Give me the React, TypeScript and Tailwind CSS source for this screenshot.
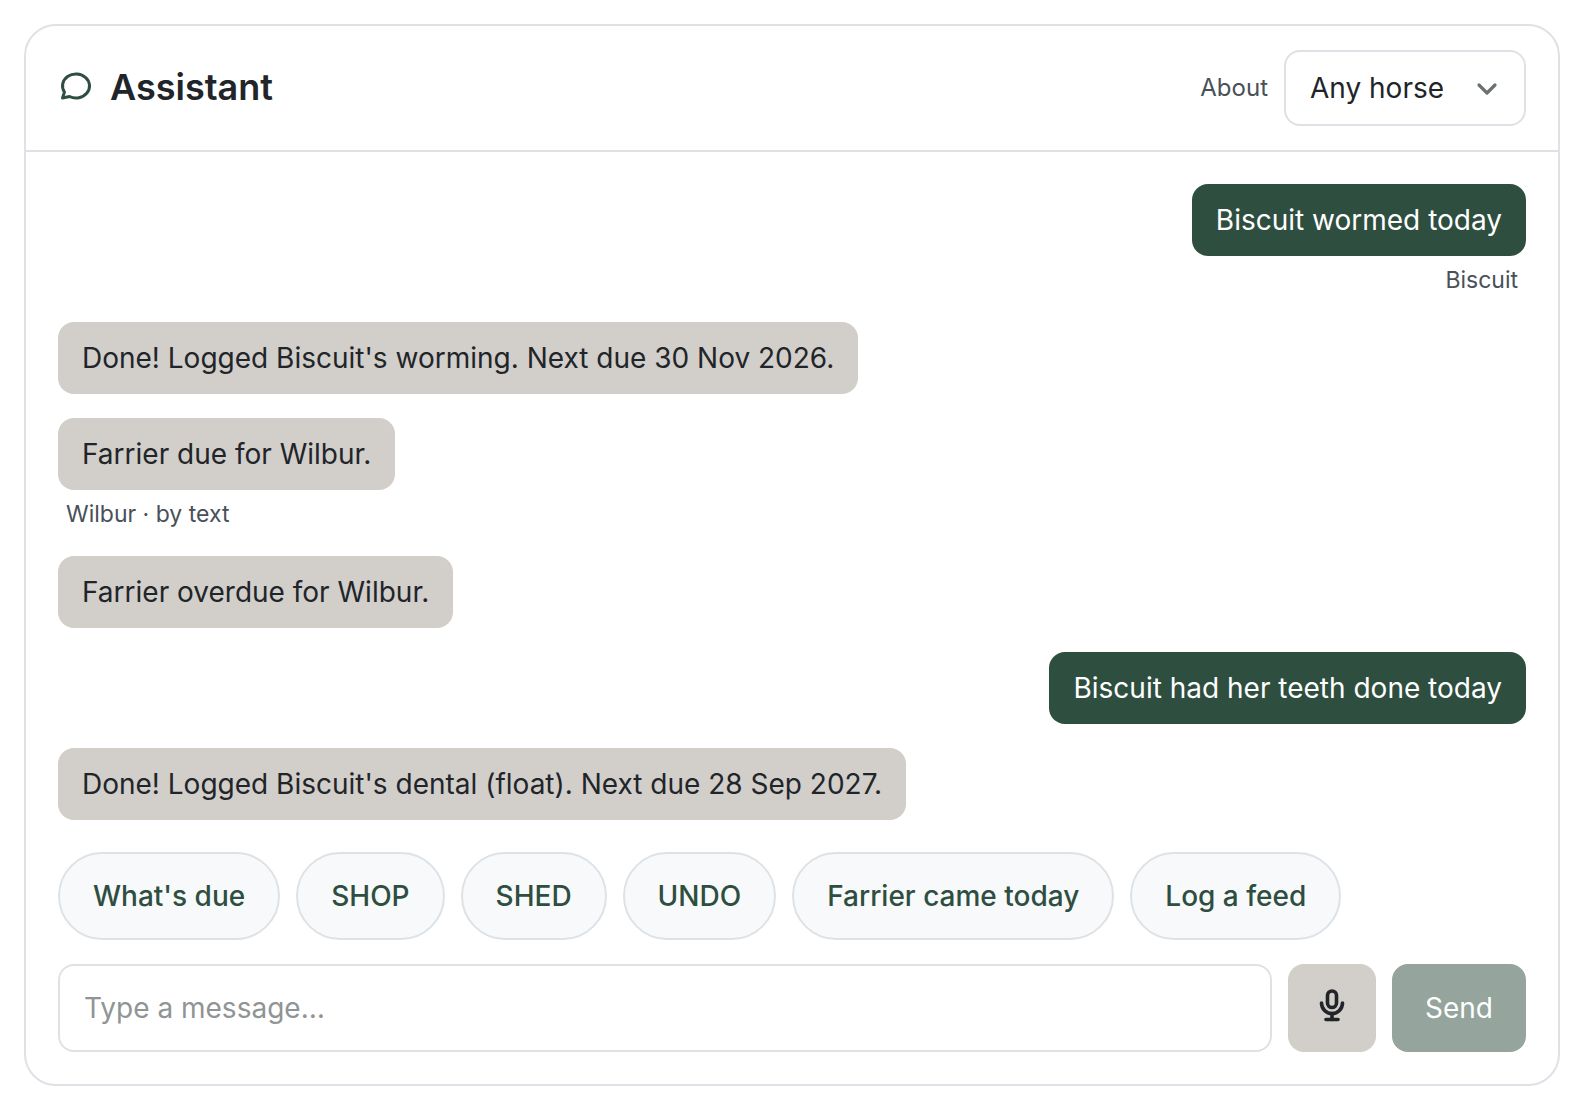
import { useState } from 'react'
import type { FormEvent } from 'react'
import { TbMessageCircle, TbMicrophone } from 'react-icons/tb'
import { clsx } from 'clsx'

type MessageT = {
  id: number
  from: 'user' | 'assistant'
  text: string
  meta?: string
}

const MESSAGES: MessageT[] = [
  { id: 1, from: 'user', text: 'Biscuit wormed today', meta: 'Biscuit' },
  { id: 2, from: 'assistant', text: "Done! Logged Biscuit's worming. Next due 30 Nov 2026." },
  { id: 3, from: 'assistant', text: 'Farrier due for Wilbur.', meta: 'Wilbur · by text' },
  { id: 4, from: 'assistant', text: 'Farrier overdue for Wilbur.' },
  { id: 5, from: 'user', text: 'Biscuit had her teeth done today' },
  { id: 6, from: 'assistant', text: "Done! Logged Biscuit's dental (float). Next due 28 Sep 2027." },
]

const QUICK_REPLIES = ["What's due", 'SHOP', 'SHED', 'UNDO', 'Farrier came today', 'Log a feed']

const HORSES = ['Any horse', 'Biscuit', 'Wilbur']

function HorseSelect() {
  return (
    <div className="flex items-center gap-4">
      <label htmlFor="horse" className="text-2xl text-[#495057]">
        About
      </label>
      <div className="relative">
        <select
          id="horse"
          className="h-[76px] w-[242px] appearance-none rounded-2xl border-2 border-[#dee2e6] bg-white pr-16 pl-6 text-[28px] text-[#212529]"
        >
          {HORSES.map((horse) => (
            <option key={horse}>{horse}</option>
          ))}
        </select>
        <svg
          viewBox="0 0 32 32"
          className="pointer-events-none absolute top-6 right-6 size-8 fill-none stroke-[#6b7072]"
          strokeWidth="3.2"
          strokeLinecap="round"
          strokeLinejoin="round"
          aria-hidden="true"
        >
          <path d="m9 11 8 8 8-8" />
        </svg>
      </div>
    </div>
  )
}

function Message({ message }: { message: MessageT }) {
  const isUser = message.from === 'user'

  return (
    <li className={clsx('flex flex-col', isUser ? 'items-end' : 'items-start')}>
      <p
        className={clsx(
          'rounded-2xl px-6 py-4 text-[28px] leading-10',
          isUser ? 'bg-[#2e4e3f] text-white' : 'bg-[#d2cec9]',
        )}
      >
        {message.text}
      </p>
      {message.meta && (
        <p className="mt-2 px-2 pb-0.5 text-[23px] leading-8 text-[#495057]">{message.meta}</p>
      )}
    </li>
  )
}

export default function App() {
  const [draft, setDraft] = useState('')

  function handleSubmit(e: FormEvent) {
    e.preventDefault()
    setDraft('')
  }

  return (
    <main className="min-h-screen bg-white p-6 font-['Inter',sans-serif] text-[#212529]">
      <section className="rounded-[32px] border-2 border-[#dee2e6] bg-white">
        <header className="flex items-center justify-between border-b-2 border-[#dee2e6] px-8 py-6">
          <h1 className="flex items-center gap-4 pb-0.5 text-4xl font-semibold">
            <TbMessageCircle className="mb-0.5 size-9 text-[#2e4e3f]" aria-hidden="true" />
            Assistant
          </h1>
          <HorseSelect />
        </header>

        <div className="flex flex-col p-8">
          <ul className="flex flex-col gap-6">
            {MESSAGES.map((message) => (
              <Message key={message.id} message={message} />
            ))}
          </ul>

          <div className="mt-8 flex flex-wrap gap-4">
            {QUICK_REPLIES.map((reply) => (
              <button
                key={reply}
                type="button"
                onClick={() => setDraft(reply)}
                className="h-[88px] rounded-full border-2 border-[#dee2e6] bg-[#f8f9fb] px-[33px] text-[28px] font-medium text-[#2e4e3f]"
              >
                {reply}
              </button>
            ))}
          </div>

          <form onSubmit={handleSubmit} className="mt-6 flex gap-4">
            <input
              type="text"
              value={draft}
              onChange={(e) => setDraft(e.target.value)}
              placeholder="Type a message…"
              aria-label="Message"
              className="h-[88px] min-w-0 flex-1 rounded-2xl border-2 border-[#dee2e6] bg-white px-6 text-[28px] placeholder:text-[#909494]"
            />
            <button
              type="button"
              aria-label="Record a message"
              className="flex size-[88px] items-center justify-center rounded-2xl bg-[#d2cec9] pb-1"
            >
              <TbMicrophone className="size-9 stroke-[2.4]" aria-hidden="true" />
            </button>
            <button
              type="submit"
              disabled={!draft}
              className="h-[88px] rounded-2xl bg-[#2e4e3f] px-[33px] text-[28px] text-white disabled:bg-[#95a49c]"
            >
              Send
            </button>
          </form>
        </div>
      </section>
    </main>
  )
}
